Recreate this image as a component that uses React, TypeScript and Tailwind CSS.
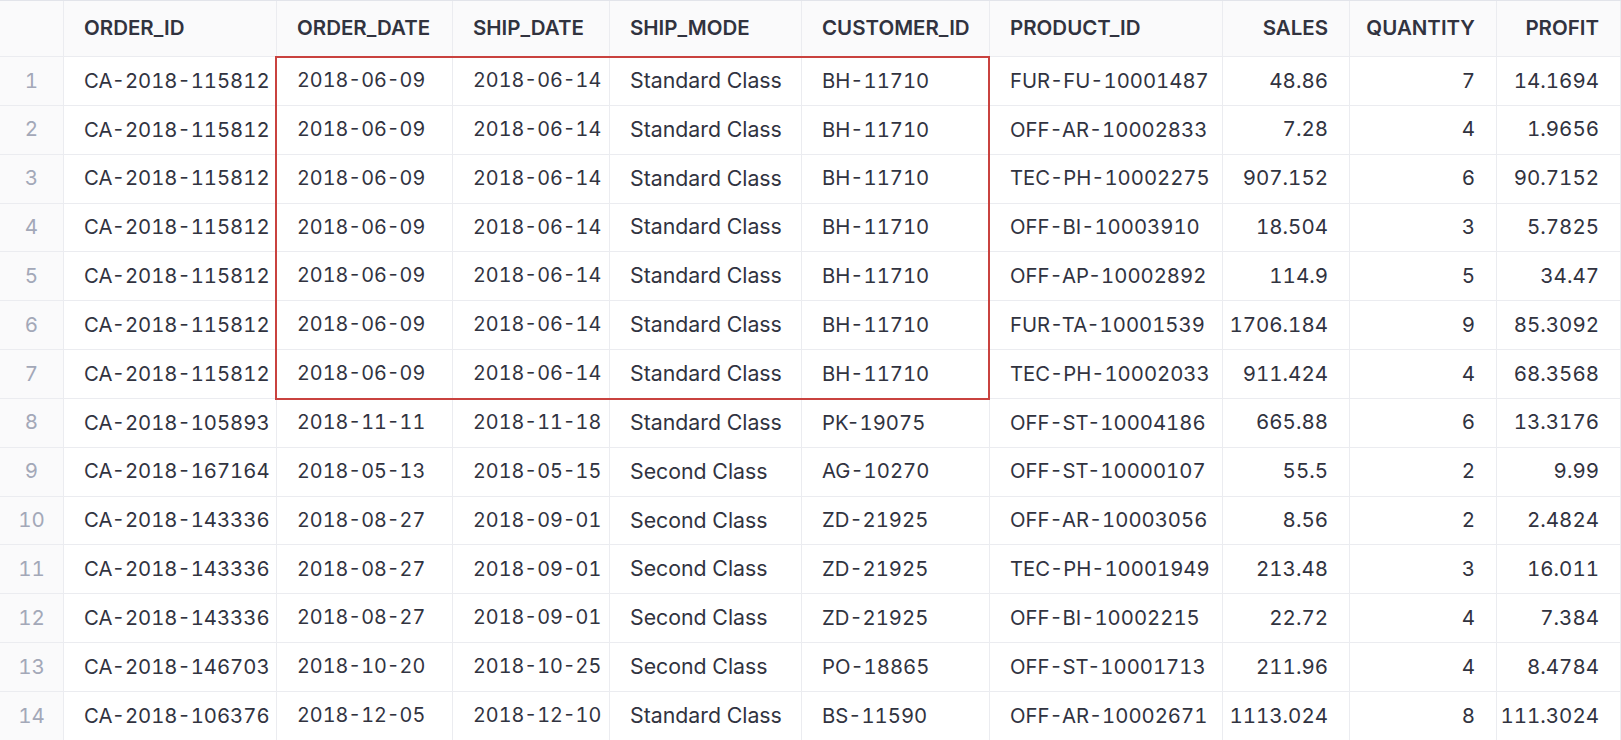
import { FC } from 'react';

type Col = { key: string; label: string; align: 'left' | 'right'; size: string };

const columns: Col[] = [
  { key: 'orderId', label: 'ORDER_ID', align: 'left', size: 'text-[20.3px]' },
  { key: 'orderDate', label: 'ORDER_DATE', align: 'left', size: 'text-[19.8px]' },
  { key: 'shipDate', label: 'SHIP_DATE', align: 'left', size: 'text-[19.8px]' },
  { key: 'shipMode', label: 'SHIP_MODE', align: 'left', size: 'text-[21.3px]' },
  { key: 'customerId', label: 'CUSTOMER_ID', align: 'left', size: 'text-[20.3px]' },
  { key: 'productId', label: 'PRODUCT_ID', align: 'left', size: 'text-[20.3px]' },
  { key: 'sales', label: 'SALES', align: 'right', size: 'text-[20.5px]' },
  { key: 'quantity', label: 'QUANTITY', align: 'right', size: 'text-[20.5px]' },
  { key: 'profit', label: 'PROFIT', align: 'right', size: 'text-[20.5px]' },
];

const rows: string[][] = [
  ['CA-2018-115812', '2018-06-09', '2018-06-14', 'Standard Class', 'BH-11710', 'FUR-FU-10001487', '48.86', '7', '14.1694'],
  ['CA-2018-115812', '2018-06-09', '2018-06-14', 'Standard Class', 'BH-11710', 'OFF-AR-10002833', '7.28', '4', '1.9656'],
  ['CA-2018-115812', '2018-06-09', '2018-06-14', 'Standard Class', 'BH-11710', 'TEC-PH-10002275', '907.152', '6', '90.7152'],
  ['CA-2018-115812', '2018-06-09', '2018-06-14', 'Standard Class', 'BH-11710', 'OFF-BI-10003910', '18.504', '3', '5.7825'],
  ['CA-2018-115812', '2018-06-09', '2018-06-14', 'Standard Class', 'BH-11710', 'OFF-AP-10002892', '114.9', '5', '34.47'],
  ['CA-2018-115812', '2018-06-09', '2018-06-14', 'Standard Class', 'BH-11710', 'FUR-TA-10001539', '1706.184', '9', '85.3092'],
  ['CA-2018-115812', '2018-06-09', '2018-06-14', 'Standard Class', 'BH-11710', 'TEC-PH-10002033', '911.424', '4', '68.3568'],
  ['CA-2018-105893', '2018-11-11', '2018-11-18', 'Standard Class', 'PK-19075', 'OFF-ST-10004186', '665.88', '6', '13.3176'],
  ['CA-2018-167164', '2018-05-13', '2018-05-15', 'Second Class', 'AG-10270', 'OFF-ST-10000107', '55.5', '2', '9.99'],
  ['CA-2018-143336', '2018-08-27', '2018-09-01', 'Second Class', 'ZD-21925', 'OFF-AR-10003056', '8.56', '2', '2.4824'],
  ['CA-2018-143336', '2018-08-27', '2018-09-01', 'Second Class', 'ZD-21925', 'TEC-PH-10001949', '213.48', '3', '16.011'],
  ['CA-2018-143336', '2018-08-27', '2018-09-01', 'Second Class', 'ZD-21925', 'OFF-BI-10002215', '22.72', '4', '7.384'],
  ['CA-2018-146703', '2018-10-20', '2018-10-25', 'Second Class', 'PO-18865', 'OFF-ST-10001713', '211.96', '4', '8.4784'],
  ['CA-2018-106376', '2018-12-05', '2018-12-10', 'Standard Class', 'BS-11590', 'OFF-AR-10002671', '1113.024', '8', '111.3024'],
];

const gridCols =
  'grid grid-cols-[64px_213px_176px_157px_192px_188px_233px_127px_147px_minmax(0,1fr)]';

const App: FC = () => {
  return (
    <div className="relative h-[740px] w-full overflow-hidden bg-white font-['Inter',sans-serif] text-[#31333f] tabular-nums">
      <div className="border-t border-[#e2e4ea]">
        {/* Header */}
        <div className={`${gridCols} h-[56px]`}>
          <div className="border-r border-b border-[#ebecf0] bg-[#fafafb]" />
          {columns.map((col) => (
            <div
              key={col.key}
              className={`flex items-center border-r border-b border-[#ebecf0] bg-[#fafafb] text-[20.5px] font-semibold whitespace-nowrap ${
                col.align === 'right' ? 'justify-end pr-[21px]' : 'pl-5'
              }`}
            >
              {col.label}
            </div>
          ))}
        </div>

        {/* Body */}
        {rows.map((row, i) => (
          <div key={i} className={`${gridCols} h-[48.85px]`}>
            <div className="flex items-center justify-center border-r border-b border-[#ebecf0] bg-[#fafafb] text-[20.5px] text-[#a3a8b8]">
              {i + 1}
            </div>
            {row.map((val, j) => (
              <div
                key={j}
                className={`flex items-center border-r border-b border-[#ebecf0] whitespace-nowrap ${columns[j].size} ${
                  columns[j].align === 'right' ? 'justify-end pr-[21px]' : 'pl-5'
                }`}
              >
                {val}
              </div>
            ))}
          </div>
        ))}
      </div>

      {/* highlight box drawn over the table */}
      <div className="pointer-events-none absolute left-[275px] top-[56px] h-[344px] w-[715px] border-2 border-[#c9423f]" />
    </div>
  );
};

export default App;
